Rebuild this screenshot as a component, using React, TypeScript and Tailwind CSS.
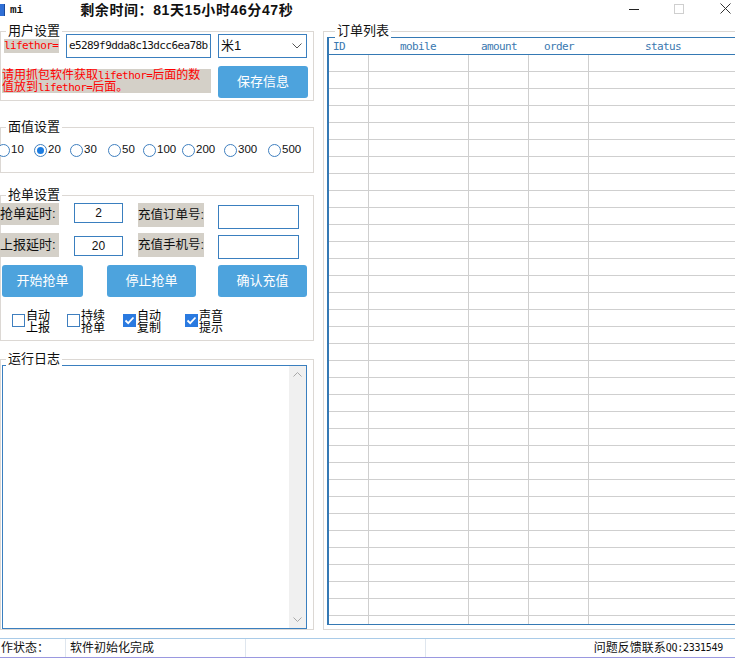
import React from 'react';

const SANS = "font-['Liberation_Sans','Noto_Sans_CJK_SC',sans-serif]";
const MONO = "font-['Liberation_Mono','Noto_Sans_CJK_SC',monospace]";
const ASC = "font-['DejaVu_Sans_Mono',monospace] text-[11px] tracking-[-0.6px]";

function Group({
  title,
  className,
  legendPos = 'left-[5px]',
  children,
}: {
  title: string;
  className: string;
  legendPos?: string;
  children?: React.ReactNode;
}) {
  return (
    <div className={`relative border border-[#dcd8d4] ${className}`}>
      <span
        className={`absolute -top-[9px] ${legendPos} bg-white px-[2px] text-[13px] leading-[16px] text-[#111]`}
      >
        {title}
      </span>
      {children}
    </div>
  );
}

function Radio({ label, checked, w }: { label: string; checked?: boolean; w: string }) {
  return (
    <div className={`flex items-center shrink-0 ${w}`}>
      <span className="w-[13px] h-[13px] rounded-full border border-[#3f7fbf] bg-white flex items-center justify-center shrink-0">
        {checked && <span className="w-[7px] h-[7px] rounded-full bg-[#1c7ce0]" />}
      </span>
      <span className="ml-[1px] text-[11.5px] text-[#111]">{label}</span>
    </div>
  );
}

function Check({ top, bottom, checked, w }: { top: string; bottom: string; checked?: boolean; w: string }) {
  return (
    <div className={`flex items-start shrink-0 ${w}`}>
      <span
        className={`mt-[4px] w-[13px] h-[13px] border flex items-center justify-center shrink-0 ${
          checked ? 'bg-[#2a7ae0] border-[#2a7ae0]' : 'bg-white border-[#3f7fbf]'
        }`}
      >
        {checked && (
          <svg width="11" height="11" viewBox="0 0 11 11">
            <polyline points="1.5,5.5 4.2,8.2 9.5,2.5" fill="none" stroke="#fff" strokeWidth="1.8" />
          </svg>
        )}
      </span>
      <span className="ml-[1px] flex flex-col text-[12px] leading-[12px] text-black">
        <span>{top}</span>
        <span>{bottom}</span>
      </span>
    </div>
  );
}

function Btn({ label, className }: { label: string; className: string }) {
  return (
    <div
      className={`h-[32px] bg-[#4da3dd] rounded-[3px] text-white text-[13px] flex items-center justify-center ${className}`}
    >
      {label}
    </div>
  );
}

const COLS = ['w-[40px] border-r', 'w-[100px] border-r', 'w-[60px] border-r', 'w-[60px] border-r', 'flex-1'];

export default function App() {
  return (
    <div className={`w-[735px] h-[659px] bg-white overflow-hidden flex flex-col text-[#111] ${SANS}`}>
      {/* title bar */}
      <div className="h-[20px] flex items-center shrink-0">
        <span className="w-[5px] h-[12px] bg-[#2f6fd6] border-r border-[#1b4a99]" />
        <span className={`${MONO} ml-[5px] text-[11px] font-bold`}>mi</span>
        <span className="ml-[57px] text-[14px] font-bold tracking-[0.6px] leading-[20px]">
          剩余时间：81天15小时46分47秒
        </span>
        <div className="ml-auto mr-[4px] flex items-center">
          <span className="w-[10px] h-px bg-[#222] -mt-[2px]" />
          <span className="ml-[35px] w-[10px] h-[10px] border border-[#cfcfcf] -mt-[3px]" />
          <svg className="ml-[36px] -mt-[3px]" width="11" height="11" viewBox="0 0 11 11">
            <path d="M0.5 0.5 L10.5 10.5 M10.5 0.5 L0.5 10.5" stroke="#333" strokeWidth="1" />
          </svg>
        </div>
      </div>

      {/* main */}
      <div className="h-[618px] flex shrink-0">
        <div className="w-[321px] shrink-0 flex flex-col">
          <Group title="用户设置" className="mt-[11px] w-[314px] h-[70px]">
            <div className="mt-[2px] h-[24px] flex items-center">
              <span className={`ml-[3px] w-[55px] h-[14px] bg-[#d4d0c8] text-[#f00] leading-[14px] ${ASC}`}>
                lifethor=
              </span>
              <div
                className={`ml-[7px] w-[145px] h-[24px] border border-[#3a7fbf] pl-[2px] flex items-center overflow-hidden whitespace-nowrap ${ASC}`}
              >
                e5289f9dda8c13dcc6ea78b:
              </div>
              <div className="ml-[7px] w-[89px] h-[24px] border border-[#3a7fbf] flex items-center pl-[2px] pr-[4px]">
                <span className="text-[13px]">米1</span>
                <svg className="ml-auto" width="10" height="6" viewBox="0 0 10 6">
                  <polyline points="0.5,0.5 5,5 9.5,0.5" fill="none" stroke="#555" strokeWidth="1" />
                </svg>
              </div>
            </div>
            <div className="mt-[8px] flex items-start">
              <div className="mt-[3px] ml-[1px] w-[209px] h-[24px] bg-[#d4d0c8] text-[#f00] text-[12px] leading-[12px] whitespace-nowrap flex flex-col">
                <span className="h-[12px]">
                  请用抓包软件获取<span className={ASC}>lifethor=</span>后面的数
                </span>
                <span className="h-[12px]">
                  值放到<span className={ASC}>lifethor=</span>后面。
                </span>
              </div>
              <Btn label="保存信息" className="ml-[7px] w-[90px]" />
            </div>
          </Group>

          <Group title="面值设置" className="mt-[26px] w-[314px] h-[46px] flex items-center">
            <div className="-ml-[4px] flex items-center">
              <Radio label="10" w="w-[37px]" />
              <Radio label="20" w="w-[36px]" checked />
              <Radio label="30" w="w-[38px]" />
              <Radio label="50" w="w-[35px]" />
              <Radio label="100" w="w-[39px]" />
              <Radio label="200" w="w-[42px]" />
              <Radio label="300" w="w-[44px]" />
              <Radio label="500" w="w-[40px]" />
            </div>
          </Group>

          <Group title="抢单设置" className="mt-[22px] w-[314px] h-[146px]">
            <div className="mt-[7px] h-[30px] flex items-start text-[13px] whitespace-nowrap">
              <span className="-ml-[1px] w-[59px] h-[22px] bg-[#d4d0c8] leading-[22px]">抢单延时:</span>
              <div className="ml-[15px] w-[49px] h-[20px] border border-[#3a7fbf] text-[12px] flex items-center justify-center">
                2
              </div>
              <span className="ml-[15px] w-[66px] h-[24px] bg-[#d4d0c8] leading-[24px] text-[12.5px] overflow-hidden">
                充值订单号:
              </span>
              <div className="ml-[14px] mt-[2px] w-[81px] h-[24px] border border-[#3a7fbf]" />
            </div>
            <div className="h-[32px] flex items-start text-[13px] whitespace-nowrap">
              <span className="-ml-[1px] w-[59px] h-[24px] bg-[#d4d0c8] leading-[24px]">上报延时:</span>
              <div className="ml-[15px] mt-[3px] w-[49px] h-[20px] border border-[#3a7fbf] text-[12px] flex items-center justify-center">
                20
              </div>
              <span className="ml-[15px] w-[66px] h-[24px] bg-[#d4d0c8] leading-[24px] text-[12.5px] overflow-hidden">
                充值手机号:
              </span>
              <div className="ml-[14px] mt-[2px] w-[81px] h-[24px] border border-[#3a7fbf]" />
            </div>
            <div className="flex">
              <Btn label="开始抢单" className="ml-[1px] w-[81px]" />
              <Btn label="停止抢单" className="ml-[24px] w-[89px]" />
              <Btn label="确认充值" className="ml-[22px] w-[89px]" />
            </div>
            <div className="mt-[13px] ml-[11px] flex">
              <Check top="自动" bottom="上报" w="w-[55px]" />
              <Check top="持续" bottom="抢单" w="w-[56px]" />
              <Check top="自动" bottom="复制" w="w-[62px]" checked />
              <Check top="声音" bottom="提示" w="w-[60px]" checked />
            </div>
          </Group>

          <Group title="运行日志" className="mt-[18px] w-[314px] h-[271px]">
            <div className="mt-[5px] ml-[1px] w-[305px] h-[264px] border border-[#3a7fbf] flex justify-end">
              <div className="w-[17px] h-full bg-[#f0f0f0] flex flex-col items-center justify-between py-[6px]">
                <svg width="9" height="5" viewBox="0 0 9 5">
                  <polyline points="0.5,4.5 4.5,0.5 8.5,4.5" fill="none" stroke="#a8a8a8" strokeWidth="1" />
                </svg>
                <svg width="9" height="5" viewBox="0 0 9 5">
                  <polyline points="0.5,0.5 4.5,4.5 8.5,0.5" fill="none" stroke="#a8a8a8" strokeWidth="1" />
                </svg>
              </div>
            </div>
          </Group>
        </div>

        <div className="flex-1">
          <Group title="订单列表" legendPos="left-[11px]" className="mt-[11px] ml-[2px] w-[420px] h-[599px]">
            <div className="mt-[5px] ml-[3px] w-[412px] h-[588px] border border-l-2 border-[#3579b4] flex flex-col">
              <div className={`h-[17px] shrink-0 border-b border-[#3579b4] flex items-end leading-[14px] text-[#3a78b0] ${ASC}`}>
                <span className="w-[40px] pl-[4px]">ID</span>
                <span className="w-[100px] pl-[31px]">mobile</span>
                <span className="w-[60px] pl-[12px]">amount</span>
                <span className="w-[60px] pl-[15px]">order</span>
                <span className="flex-1 pl-[56px]">status</span>
              </div>
              {Array.from({ length: 33 }).map((_, i) => (
                <div key={i} className="h-[17px] shrink-0 flex border-b border-[#cfcfcf]">
                  {COLS.map((c, j) => (
                    <span key={j} className={`${c} border-[#cfcfcf]`} />
                  ))}
                </div>
              ))}
              <div className="flex-1 flex">
                {COLS.map((c, j) => (
                  <span key={j} className={`${c} border-[#cfcfcf]`} />
                ))}
              </div>
            </div>
          </Group>
        </div>
      </div>

      {/* status bar */}
      <div className="h-[20px] shrink-0 border-t border-t-[#a9cbe8] border-b border-b-[#9a98e0] flex text-[12px] leading-[18px]">
        <span className="w-[66px] border-r border-[#dfe6ee] pl-[1px] whitespace-nowrap">作状态：</span>
        <span className="w-[180px] border-r border-[#dfe6ee] pl-[4px]">软件初始化完成</span>
        <span className="w-[180px] border-r border-[#dfe6ee]" />
        <span className="flex-1 flex justify-end pr-[12px] whitespace-nowrap">
          问题反馈联系<span className="font-['DejaVu_Sans_Mono',monospace] text-[10px] tracking-[-0.3px]">QQ:2331549</span>
        </span>
      </div>
    </div>
  );
}
